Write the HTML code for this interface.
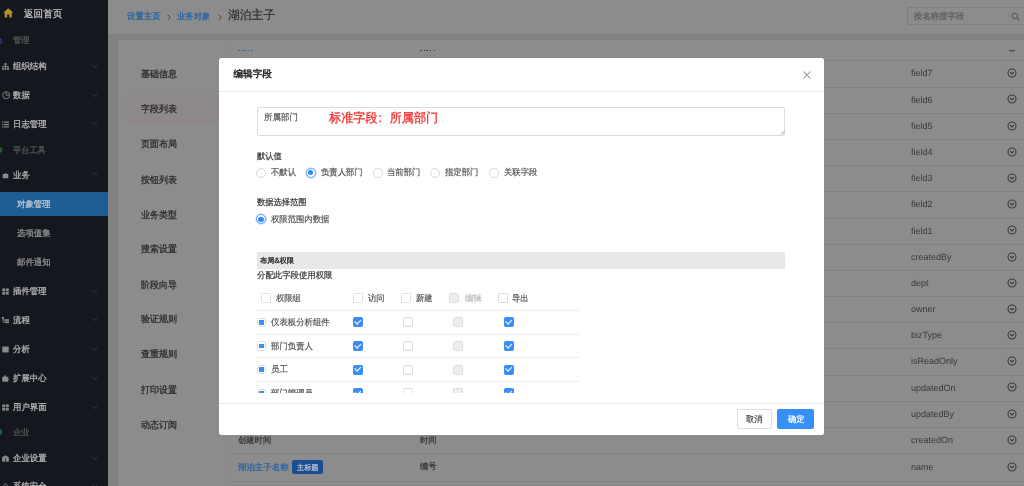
<!DOCTYPE html><html><head><meta charset="utf-8"><style>
*{box-sizing:border-box;margin:0;padding:0}
html,body{width:1024px;height:486px;overflow:hidden;background:#828282;font-family:"Liberation Sans",sans-serif}
html{filter:blur(0.4px)}
.a{position:absolute}
.t{position:absolute;white-space:nowrap;text-rendering:geometricPrecision;transform-origin:0 50%}
.ch{position:absolute;width:3.5px;height:3.5px;border-right:1px solid #303237;border-bottom:1px solid #303237;transform:rotate(45deg)}
.chu{transform:rotate(-135deg)}
.cb{position:absolute;width:10px;height:10px;border:1px solid #dcdcdc;border-radius:1.5px;background:#fff}
.cb.dis{background:#efefef;border-color:#dadada}
.cb.on{background:#3a8ff7;border-color:#3a8ff7}
.cb.on:after{content:"";position:absolute;left:2.7px;top:-0.1px;width:2.5px;height:4.6px;border-right:1.05px solid #fff;border-bottom:1.05px solid #fff;transform:rotate(45deg)}
.cb.ind:after{content:"";position:absolute;left:1.3px;top:1.4px;width:4.4px;height:4.4px;background:#3a8ff7}
.rad{position:absolute;width:9.8px;height:9.8px;border:1px solid #d9d9d9;border-radius:50%;background:#fff}
.rad.on{border-color:#5ea6fc;box-shadow:0 0 0 0.7px rgba(58,143,247,.3)}
.rad.on:after{content:"";position:absolute;left:1.3px;top:1.3px;width:5.2px;height:5.2px;border-radius:50%;background:#2f88fb}
</style></head><body>
<div class="a" style="left:0.00px;top:0.00px;width:108.00px;height:486.00px;background:#15171e;"></div>
<svg class="a" style="left:3px;top:8.4px" width="10.5" height="9.6" viewBox="0 0 11 10"><path d="M5.5 0.2 L0.2 5 L1.8 5 L1.8 9.8 L4.3 9.8 L4.3 6.8 L6.7 6.8 L6.7 9.8 L9.2 9.8 L9.2 5 L10.8 5 Z" fill="#b39030"/></svg>
<div class="t" style="left:24.00px;top:9.31px;font-size:9.984px;line-height:11.981px;color:#c4c4c4;-webkit-text-stroke-width:0.250px;transform:scaleX(0.9615);">返回首页</div>
<div class="a" style="left:-4px;top:37.6px;width:6px;height:6px;border:1px solid #7b2fd0;border-radius:50%"></div>
<div class="t" style="left:13.20px;top:35.48px;font-size:8.528px;line-height:10.234px;color:#545454;-webkit-text-stroke-width:0.300px;transform:scaleX(0.9615);">管理</div>
<div class="t" style="left:13.20px;top:61.26px;font-size:8.736px;line-height:10.483px;color:#b2b2b2;-webkit-text-stroke-width:0.300px;transform:scaleX(0.9615);">组织结构</div>
<svg class="a" style="left:2.3px;top:63.0px" width="7" height="7" viewBox="0 0 8 8" fill="#8a8a8a"><rect x="2.8" y="0" width="2.4" height="2.6"/><rect x="3.5" y="2.4" width="1" height="1.6"/><rect x="0.6" y="3.6" width="6.8" height="1"/><rect x="0.6" y="3.6" width="1" height="2"/><rect x="6.4" y="3.6" width="1" height="2"/><rect x="3.5" y="3.6" width="1" height="2"/><rect x="0" y="5.6" width="2.2" height="2.2"/><rect x="2.9" y="5.6" width="2.2" height="2.2"/><rect x="5.8" y="5.6" width="2.2" height="2.2"/></svg>
<div class="ch" style="left:92.8px;top:62.7px"></div>
<div class="t" style="left:13.20px;top:90.16px;font-size:8.736px;line-height:10.483px;color:#b2b2b2;-webkit-text-stroke-width:0.300px;transform:scaleX(0.9615);">数据</div>
<svg class="a" style="left:1.5px;top:91.2px" width="8.4" height="8.4" viewBox="0 0 8 8" fill="#8a8a8a"><circle cx="4" cy="4" r="3.3" fill="none" stroke="#8a8a8a" stroke-width="0.85"/><path d="M4 1.2 V4 H6.6" fill="none" stroke="#8a8a8a" stroke-width="0.85"/></svg>
<div class="ch" style="left:92.8px;top:91.6px"></div>
<div class="t" style="left:13.20px;top:118.96px;font-size:8.736px;line-height:10.483px;color:#b2b2b2;-webkit-text-stroke-width:0.300px;transform:scaleX(0.9615);">日志管理</div>
<svg class="a" style="left:2.3px;top:120.7px" width="7" height="7" viewBox="0 0 8 8" fill="#8a8a8a"><rect x="0" y="0.6" width="1.4" height="1.4"/><rect x="2.2" y="0.6" width="5.8" height="1.4"/><rect x="0" y="3.3" width="1.4" height="1.4"/><rect x="2.2" y="3.3" width="5.8" height="1.4"/><rect x="0" y="6" width="1.4" height="1.4"/><rect x="2.2" y="6" width="5.8" height="1.4"/></svg>
<div class="ch" style="left:92.8px;top:120.4px"></div>
<div class="a" style="left:-4px;top:146.8px;width:6px;height:6px;border:1px solid #2aa52a;border-radius:50%"></div>
<div class="t" style="left:13.20px;top:144.68px;font-size:8.528px;line-height:10.234px;color:#545454;-webkit-text-stroke-width:0.300px;transform:scaleX(0.9615);">平台工具</div>
<div class="t" style="left:13.20px;top:170.16px;font-size:8.736px;line-height:10.483px;color:#b2b2b2;-webkit-text-stroke-width:0.300px;transform:scaleX(0.9615);">业务</div>
<svg class="a" style="left:2.3px;top:171.9px" width="7" height="7" viewBox="0 0 8 8" fill="#8a8a8a"><path d="M3.2 1.2 H4.8 V2.3 H7.2 V7.2 H0.8 V2.3 H3.2 Z"/></svg>
<div class="ch chu" style="left:92.8px;top:174.4px"></div>
<div class="a" style="left:0.00px;top:192.00px;width:108.00px;height:24.40px;background:#1f5e94;"></div>
<div class="t" style="left:16.50px;top:198.96px;font-size:8.736px;line-height:10.483px;color:#b8c4d1;-webkit-text-stroke-width:0.300px;transform:scaleX(0.9615);">对象管理</div>
<div class="t" style="left:16.50px;top:228.46px;font-size:8.736px;line-height:10.483px;color:#8c8c8c;-webkit-text-stroke-width:0.300px;transform:scaleX(0.9615);">选项值集</div>
<div class="t" style="left:16.50px;top:257.26px;font-size:8.736px;line-height:10.483px;color:#8c8c8c;-webkit-text-stroke-width:0.300px;transform:scaleX(0.9615);">邮件通知</div>
<div class="t" style="left:13.20px;top:286.16px;font-size:8.736px;line-height:10.483px;color:#b2b2b2;-webkit-text-stroke-width:0.300px;transform:scaleX(0.9615);">插件管理</div>
<svg class="a" style="left:2.3px;top:287.9px" width="7" height="7" viewBox="0 0 8 8" fill="#8a8a8a"><rect x="0.3" y="0.5" width="3.3" height="3.2"/><rect x="4.4" y="0.5" width="3.3" height="3.2"/><rect x="0.3" y="4.4" width="3.3" height="3.2"/><rect x="4.4" y="4.4" width="3.3" height="3.2"/></svg>
<div class="ch" style="left:92.8px;top:287.6px"></div>
<div class="t" style="left:13.20px;top:314.96px;font-size:8.736px;line-height:10.483px;color:#b2b2b2;-webkit-text-stroke-width:0.300px;transform:scaleX(0.9615);">流程</div>
<svg class="a" style="left:2.3px;top:316.7px" width="7" height="7" viewBox="0 0 8 8" fill="#8a8a8a"><rect x="0" y="0" width="2.2" height="2.2"/><rect x="0.7" y="2" width="0.9" height="4"/><rect x="1.4" y="3" width="2" height="0.9"/><rect x="1.4" y="5.4" width="2" height="0.9"/><rect x="3.4" y="2.5" width="4.6" height="2"/><rect x="3.4" y="5" width="4.6" height="2"/></svg>
<div class="ch" style="left:92.8px;top:316.4px"></div>
<div class="t" style="left:13.20px;top:344.16px;font-size:8.736px;line-height:10.483px;color:#b2b2b2;-webkit-text-stroke-width:0.300px;transform:scaleX(0.9615);">分析</div>
<svg class="a" style="left:2.3px;top:345.9px" width="7" height="7" viewBox="0 0 8 8" fill="#8a8a8a"><rect x="0.3" y="0.6" width="7.4" height="6.8"/></svg>
<div class="ch" style="left:92.8px;top:345.6px"></div>
<div class="t" style="left:13.20px;top:373.46px;font-size:8.736px;line-height:10.483px;color:#b2b2b2;-webkit-text-stroke-width:0.300px;transform:scaleX(0.9615);">扩展中心</div>
<svg class="a" style="left:2.3px;top:375.2px" width="7" height="7" viewBox="0 0 8 8" fill="#8a8a8a"><path d="M2.5 0.5 Q4 -0.4 4.6 1.2 L4.6 2 H7.2 V4 Q8.6 4.3 7.2 5.5 V7.6 H0.4 V5.2 Q-0.7 4.2 0.4 3.3 V2 H2.4 Z"/></svg>
<div class="ch" style="left:92.8px;top:374.9px"></div>
<div class="t" style="left:13.20px;top:402.26px;font-size:8.736px;line-height:10.483px;color:#b2b2b2;-webkit-text-stroke-width:0.300px;transform:scaleX(0.9615);">用户界面</div>
<svg class="a" style="left:2.3px;top:404.0px" width="7" height="7" viewBox="0 0 8 8" fill="#8a8a8a"><rect x="0.3" y="0.5" width="3.3" height="3.2"/><rect x="4.4" y="0.5" width="3.3" height="3.2"/><rect x="0.3" y="4.4" width="3.3" height="3.2"/><rect x="4.4" y="4.4" width="3.3" height="3.2"/></svg>
<div class="ch" style="left:92.8px;top:403.7px"></div>
<div class="a" style="left:-4px;top:429.4px;width:6px;height:6px;border:1px solid #1aa5b8;border-radius:50%"></div>
<div class="t" style="left:13.20px;top:427.28px;font-size:8.528px;line-height:10.234px;color:#545454;-webkit-text-stroke-width:0.300px;transform:scaleX(0.9615);">企业</div>
<div class="t" style="left:13.20px;top:453.16px;font-size:8.736px;line-height:10.483px;color:#b2b2b2;-webkit-text-stroke-width:0.300px;transform:scaleX(0.9615);">企业设置</div>
<svg class="a" style="left:2.3px;top:454.9px" width="7" height="7" viewBox="0 0 8 8" fill="#8a8a8a"><path d="M4 0.2 L7.8 2.6 V7.8 H4.4 V3 H3.6 V7.8 H0.2 V2.6 Z"/></svg>
<div class="ch" style="left:92.8px;top:454.6px"></div>
<div class="t" style="left:13.20px;top:481.26px;font-size:8.736px;line-height:10.483px;color:#b2b2b2;-webkit-text-stroke-width:0.300px;transform:scaleX(0.9615);">系统安全</div>
<svg class="a" style="left:2.3px;top:483.0px" width="7" height="7" viewBox="0 0 8 8" fill="#8a8a8a"><path d="M2 3.5 V2.2 Q4 -0.8 6 2.2 V3.5" fill="none" stroke="#808080" stroke-width="1"/><rect x="0.8" y="3.5" width="6.4" height="4.5"/></svg>
<div class="ch" style="left:92.8px;top:482.7px"></div>
<div class="a" style="left:108.00px;top:0.00px;width:916.00px;height:33.50px;background:#8c8c8c;"></div>
<div class="t" style="left:126.50px;top:10.76px;font-size:8.736px;line-height:10.483px;color:#2762a3;-webkit-text-stroke-width:0.250px;transform:scaleX(0.9615);">设置主页</div>
<svg class="a" style="left:167px;top:13.5px" width="4" height="6.5" viewBox="0 0 4 6.5"><path d="M0.5 0.5 L3.3 3.25 L0.5 6" fill="none" stroke="#3c3c3c" stroke-width="0.9"/></svg>
<div class="t" style="left:177.40px;top:10.79px;font-size:8.684px;line-height:10.421px;color:#2762a3;-webkit-text-stroke-width:0.250px;transform:scaleX(0.9615);">业务对象</div>
<svg class="a" style="left:218px;top:13.5px" width="4" height="6.5" viewBox="0 0 4 6.5"><path d="M0.5 0.5 L3.3 3.25 L0.5 6" fill="none" stroke="#3c3c3c" stroke-width="0.9"/></svg>
<div class="t" style="left:228.00px;top:8.04px;font-size:12.272px;line-height:14.726px;color:#2c2c2c;-webkit-text-stroke-width:0.200px;transform:scaleX(0.9615);">湖泊主子</div>
<div class="a" style="left:906.5px;top:7px;width:130px;height:18.2px;border:1px solid #7f7f7f;border-radius:2px"></div>
<div class="t" style="left:913.90px;top:11.16px;font-size:8.736px;line-height:10.483px;color:#5c5c5c;-webkit-text-stroke-width:0.200px;transform:scaleX(0.9615);">按名称搜字段</div>
<svg class="a" style="left:1011px;top:12px" width="9" height="9" viewBox="0 0 9 9"><circle cx="3.8" cy="3.8" r="2.8" fill="none" stroke="#505050" stroke-width="1"/><path d="M5.9 5.9 L8.2 8.2" stroke="#505050" stroke-width="1.1"/></svg>
<div class="a" style="left:117.50px;top:40.20px;width:906.50px;height:446.00px;background:#8c8c8c;"></div>
<div class="a" style="left:126.20px;top:93.80px;width:100.00px;height:28.80px;background:#8e8888;"></div>
<div class="t" style="left:141.00px;top:69.08px;font-size:9.360px;line-height:11.232px;color:#2a2a2a;-webkit-text-stroke-width:0.280px;transform:scaleX(0.9615);">基础信息</div>
<div class="t" style="left:141.00px;top:104.08px;font-size:9.360px;line-height:11.232px;color:#2a2a2a;-webkit-text-stroke-width:0.280px;transform:scaleX(0.9615);">字段列表</div>
<div class="t" style="left:141.00px;top:139.38px;font-size:9.360px;line-height:11.232px;color:#2a2a2a;-webkit-text-stroke-width:0.280px;transform:scaleX(0.9615);">页面布局</div>
<div class="t" style="left:141.00px;top:174.88px;font-size:9.360px;line-height:11.232px;color:#2a2a2a;-webkit-text-stroke-width:0.280px;transform:scaleX(0.9615);">按钮列表</div>
<div class="t" style="left:141.00px;top:209.68px;font-size:9.360px;line-height:11.232px;color:#2a2a2a;-webkit-text-stroke-width:0.280px;transform:scaleX(0.9615);">业务类型</div>
<div class="t" style="left:141.00px;top:244.38px;font-size:9.360px;line-height:11.232px;color:#2a2a2a;-webkit-text-stroke-width:0.280px;transform:scaleX(0.9615);">搜索设置</div>
<div class="t" style="left:141.00px;top:279.68px;font-size:9.360px;line-height:11.232px;color:#2a2a2a;-webkit-text-stroke-width:0.280px;transform:scaleX(0.9615);">阶段向导</div>
<div class="t" style="left:141.00px;top:314.28px;font-size:9.360px;line-height:11.232px;color:#2a2a2a;-webkit-text-stroke-width:0.280px;transform:scaleX(0.9615);">验证规则</div>
<div class="t" style="left:141.00px;top:349.38px;font-size:9.360px;line-height:11.232px;color:#2a2a2a;-webkit-text-stroke-width:0.280px;transform:scaleX(0.9615);">查重规则</div>
<div class="t" style="left:141.00px;top:385.48px;font-size:9.360px;line-height:11.232px;color:#2a2a2a;-webkit-text-stroke-width:0.280px;transform:scaleX(0.9615);">打印设置</div>
<div class="t" style="left:141.00px;top:420.08px;font-size:9.360px;line-height:11.232px;color:#2a2a2a;-webkit-text-stroke-width:0.280px;transform:scaleX(0.9615);">动态订阅</div>
<div class="a" style="left:226.30px;top:40.00px;width:1.00px;height:446.00px;background:#868686;"></div>
<div class="a" style="left:118px;top:49.6px;width:906px;height:437px;overflow:hidden">
<div class="a" style="left:115.00px;top:10.80px;width:791.00px;height:1.00px;background:#818181;"></div>
<svg class="a" style="left:889.30px;top:-7.60px" width="10" height="10" viewBox="0 0 10 10"><circle cx="5" cy="5" r="4" fill="none" stroke="#3a3a3a" stroke-width="1.1"/><path d="M3.2 4.2 L5 6 L6.8 4.2" fill="none" stroke="#3a3a3a" stroke-width="1.2"/></svg>
<div class="a" style="left:115.00px;top:36.99px;width:791.00px;height:1.00px;background:#818181;"></div>
<svg class="a" style="left:889.30px;top:18.60px" width="10" height="10" viewBox="0 0 10 10"><circle cx="5" cy="5" r="4" fill="none" stroke="#3a3a3a" stroke-width="1.1"/><path d="M3.2 4.2 L5 6 L6.8 4.2" fill="none" stroke="#3a3a3a" stroke-width="1.2"/></svg>
<div class="t" style="left:792.90px;top:18.78px;font-size:9.000px;line-height:10.800px;color:#383838;-webkit-text-stroke-width:0.000px;">field7</div>
<div class="a" style="left:115.00px;top:63.18px;width:791.00px;height:1.00px;background:#818181;"></div>
<svg class="a" style="left:889.30px;top:44.79px" width="10" height="10" viewBox="0 0 10 10"><circle cx="5" cy="5" r="4" fill="none" stroke="#3a3a3a" stroke-width="1.1"/><path d="M3.2 4.2 L5 6 L6.8 4.2" fill="none" stroke="#3a3a3a" stroke-width="1.2"/></svg>
<div class="t" style="left:792.90px;top:44.97px;font-size:9.000px;line-height:10.800px;color:#383838;-webkit-text-stroke-width:0.000px;">field6</div>
<div class="a" style="left:115.00px;top:89.37px;width:791.00px;height:1.00px;background:#818181;"></div>
<svg class="a" style="left:889.30px;top:70.97px" width="10" height="10" viewBox="0 0 10 10"><circle cx="5" cy="5" r="4" fill="none" stroke="#3a3a3a" stroke-width="1.1"/><path d="M3.2 4.2 L5 6 L6.8 4.2" fill="none" stroke="#3a3a3a" stroke-width="1.2"/></svg>
<div class="t" style="left:792.90px;top:71.16px;font-size:9.000px;line-height:10.800px;color:#383838;-webkit-text-stroke-width:0.000px;">field5</div>
<div class="a" style="left:115.00px;top:115.56px;width:791.00px;height:1.00px;background:#818181;"></div>
<svg class="a" style="left:889.30px;top:97.16px" width="10" height="10" viewBox="0 0 10 10"><circle cx="5" cy="5" r="4" fill="none" stroke="#3a3a3a" stroke-width="1.1"/><path d="M3.2 4.2 L5 6 L6.8 4.2" fill="none" stroke="#3a3a3a" stroke-width="1.2"/></svg>
<div class="t" style="left:792.90px;top:97.35px;font-size:9.000px;line-height:10.800px;color:#383838;-webkit-text-stroke-width:0.000px;">field4</div>
<div class="a" style="left:115.00px;top:141.75px;width:791.00px;height:1.00px;background:#818181;"></div>
<svg class="a" style="left:889.30px;top:123.35px" width="10" height="10" viewBox="0 0 10 10"><circle cx="5" cy="5" r="4" fill="none" stroke="#3a3a3a" stroke-width="1.1"/><path d="M3.2 4.2 L5 6 L6.8 4.2" fill="none" stroke="#3a3a3a" stroke-width="1.2"/></svg>
<div class="t" style="left:792.90px;top:123.54px;font-size:9.000px;line-height:10.800px;color:#383838;-webkit-text-stroke-width:0.000px;">field3</div>
<div class="a" style="left:115.00px;top:167.94px;width:791.00px;height:1.00px;background:#818181;"></div>
<svg class="a" style="left:889.30px;top:149.55px" width="10" height="10" viewBox="0 0 10 10"><circle cx="5" cy="5" r="4" fill="none" stroke="#3a3a3a" stroke-width="1.1"/><path d="M3.2 4.2 L5 6 L6.8 4.2" fill="none" stroke="#3a3a3a" stroke-width="1.2"/></svg>
<div class="t" style="left:792.90px;top:149.73px;font-size:9.000px;line-height:10.800px;color:#383838;-webkit-text-stroke-width:0.000px;">field2</div>
<div class="a" style="left:115.00px;top:194.13px;width:791.00px;height:1.00px;background:#818181;"></div>
<svg class="a" style="left:889.30px;top:175.74px" width="10" height="10" viewBox="0 0 10 10"><circle cx="5" cy="5" r="4" fill="none" stroke="#3a3a3a" stroke-width="1.1"/><path d="M3.2 4.2 L5 6 L6.8 4.2" fill="none" stroke="#3a3a3a" stroke-width="1.2"/></svg>
<div class="t" style="left:792.90px;top:175.92px;font-size:9.000px;line-height:10.800px;color:#383838;-webkit-text-stroke-width:0.000px;">field1</div>
<div class="a" style="left:115.00px;top:220.32px;width:791.00px;height:1.00px;background:#818181;"></div>
<svg class="a" style="left:889.30px;top:201.93px" width="10" height="10" viewBox="0 0 10 10"><circle cx="5" cy="5" r="4" fill="none" stroke="#3a3a3a" stroke-width="1.1"/><path d="M3.2 4.2 L5 6 L6.8 4.2" fill="none" stroke="#3a3a3a" stroke-width="1.2"/></svg>
<div class="t" style="left:792.90px;top:202.11px;font-size:9.000px;line-height:10.800px;color:#383838;-webkit-text-stroke-width:0.000px;">createdBy</div>
<div class="a" style="left:115.00px;top:246.51px;width:791.00px;height:1.00px;background:#818181;"></div>
<svg class="a" style="left:889.30px;top:228.12px" width="10" height="10" viewBox="0 0 10 10"><circle cx="5" cy="5" r="4" fill="none" stroke="#3a3a3a" stroke-width="1.1"/><path d="M3.2 4.2 L5 6 L6.8 4.2" fill="none" stroke="#3a3a3a" stroke-width="1.2"/></svg>
<div class="t" style="left:792.90px;top:228.30px;font-size:9.000px;line-height:10.800px;color:#383838;-webkit-text-stroke-width:0.000px;">dept</div>
<div class="a" style="left:115.00px;top:272.70px;width:791.00px;height:1.00px;background:#818181;"></div>
<svg class="a" style="left:889.30px;top:254.31px" width="10" height="10" viewBox="0 0 10 10"><circle cx="5" cy="5" r="4" fill="none" stroke="#3a3a3a" stroke-width="1.1"/><path d="M3.2 4.2 L5 6 L6.8 4.2" fill="none" stroke="#3a3a3a" stroke-width="1.2"/></svg>
<div class="t" style="left:792.90px;top:254.49px;font-size:9.000px;line-height:10.800px;color:#383838;-webkit-text-stroke-width:0.000px;">owner</div>
<div class="a" style="left:115.00px;top:298.89px;width:791.00px;height:1.00px;background:#818181;"></div>
<svg class="a" style="left:889.30px;top:280.50px" width="10" height="10" viewBox="0 0 10 10"><circle cx="5" cy="5" r="4" fill="none" stroke="#3a3a3a" stroke-width="1.1"/><path d="M3.2 4.2 L5 6 L6.8 4.2" fill="none" stroke="#3a3a3a" stroke-width="1.2"/></svg>
<div class="t" style="left:792.90px;top:280.68px;font-size:9.000px;line-height:10.800px;color:#383838;-webkit-text-stroke-width:0.000px;">bizType</div>
<div class="a" style="left:115.00px;top:325.08px;width:791.00px;height:1.00px;background:#818181;"></div>
<svg class="a" style="left:889.30px;top:306.69px" width="10" height="10" viewBox="0 0 10 10"><circle cx="5" cy="5" r="4" fill="none" stroke="#3a3a3a" stroke-width="1.1"/><path d="M3.2 4.2 L5 6 L6.8 4.2" fill="none" stroke="#3a3a3a" stroke-width="1.2"/></svg>
<div class="t" style="left:792.90px;top:306.87px;font-size:9.000px;line-height:10.800px;color:#383838;-webkit-text-stroke-width:0.000px;">isReadOnly</div>
<div class="a" style="left:115.00px;top:351.27px;width:791.00px;height:1.00px;background:#818181;"></div>
<svg class="a" style="left:889.30px;top:332.88px" width="10" height="10" viewBox="0 0 10 10"><circle cx="5" cy="5" r="4" fill="none" stroke="#3a3a3a" stroke-width="1.1"/><path d="M3.2 4.2 L5 6 L6.8 4.2" fill="none" stroke="#3a3a3a" stroke-width="1.2"/></svg>
<div class="t" style="left:792.90px;top:333.06px;font-size:9.000px;line-height:10.800px;color:#383838;-webkit-text-stroke-width:0.000px;">updatedOn</div>
<div class="a" style="left:115.00px;top:377.46px;width:791.00px;height:1.00px;background:#818181;"></div>
<svg class="a" style="left:889.30px;top:359.06px" width="10" height="10" viewBox="0 0 10 10"><circle cx="5" cy="5" r="4" fill="none" stroke="#3a3a3a" stroke-width="1.1"/><path d="M3.2 4.2 L5 6 L6.8 4.2" fill="none" stroke="#3a3a3a" stroke-width="1.2"/></svg>
<div class="t" style="left:792.90px;top:359.25px;font-size:9.000px;line-height:10.800px;color:#383838;-webkit-text-stroke-width:0.000px;">updatedBy</div>
<div class="a" style="left:115.00px;top:403.65px;width:791.00px;height:1.00px;background:#818181;"></div>
<svg class="a" style="left:889.30px;top:385.25px" width="10" height="10" viewBox="0 0 10 10"><circle cx="5" cy="5" r="4" fill="none" stroke="#3a3a3a" stroke-width="1.1"/><path d="M3.2 4.2 L5 6 L6.8 4.2" fill="none" stroke="#3a3a3a" stroke-width="1.2"/></svg>
<div class="t" style="left:792.90px;top:385.44px;font-size:9.000px;line-height:10.800px;color:#383838;-webkit-text-stroke-width:0.000px;">createdOn</div>
<div class="a" style="left:115.00px;top:431.05px;width:791.00px;height:1.00px;background:#818181;"></div>
<svg class="a" style="left:889.30px;top:412.05px" width="10" height="10" viewBox="0 0 10 10"><circle cx="5" cy="5" r="4" fill="none" stroke="#3a3a3a" stroke-width="1.1"/><path d="M3.2 4.2 L5 6 L6.8 4.2" fill="none" stroke="#3a3a3a" stroke-width="1.2"/></svg>
<div class="t" style="left:792.90px;top:412.23px;font-size:9.000px;line-height:10.800px;color:#383838;-webkit-text-stroke-width:0.000px;">name</div>
<div class="a" style="left:120.30px;top:0.00px;width:1.50px;height:1.10px;background:#3566a0;"></div>
<div class="a" style="left:123.40px;top:0.00px;width:1.50px;height:1.10px;background:#3566a0;"></div>
<div class="a" style="left:126.10px;top:0.00px;width:1.50px;height:1.10px;background:#3566a0;"></div>
<div class="a" style="left:129.60px;top:0.00px;width:1.50px;height:1.10px;background:#3566a0;"></div>
<div class="a" style="left:133.30px;top:0.00px;width:1.50px;height:1.10px;background:#3566a0;"></div>
<div class="a" style="left:302.40px;top:0.00px;width:1.50px;height:1.10px;background:#404040;"></div>
<div class="a" style="left:305.50px;top:0.00px;width:1.50px;height:1.10px;background:#404040;"></div>
<div class="a" style="left:308.00px;top:0.00px;width:1.50px;height:1.10px;background:#404040;"></div>
<div class="a" style="left:311.50px;top:0.00px;width:1.50px;height:1.10px;background:#404040;"></div>
<div class="a" style="left:315.60px;top:0.00px;width:1.50px;height:1.10px;background:#404040;"></div>
<div class="t" style="left:120.30px;top:385.72px;font-size:8.632px;line-height:10.358px;color:#303030;-webkit-text-stroke-width:0.200px;transform:scaleX(0.9615);">创建时间</div>
<div class="t" style="left:302.30px;top:385.58px;font-size:8.528px;line-height:10.234px;color:#303030;-webkit-text-stroke-width:0.200px;transform:scaleX(0.9615);">时间</div>
<div class="t" style="left:120.30px;top:412.13px;font-size:8.788px;line-height:10.546px;color:#2762a3;-webkit-text-stroke-width:0.250px;transform:scaleX(0.9615);">湖泊主子名称</div>
<div class="a" style="left:173.70px;top:410.50px;width:31.30px;height:13.70px;background:#1a4d91;border-radius:2px"></div>
<div class="t" style="left:178.80px;top:413.21px;font-size:7.488px;line-height:8.986px;color:#b8c4d3;-webkit-text-stroke-width:0.200px;transform:scaleX(0.9615);">主标题</div>
<div class="t" style="left:302.30px;top:411.28px;font-size:8.528px;line-height:10.234px;color:#303030;-webkit-text-stroke-width:0.200px;transform:scaleX(0.9615);">编号</div>
</div>
<div class="a" style="left:219px;top:58.4px;width:605px;height:376.4px;background:#fff;border-radius:2.5px;overflow:hidden">
<div class="t" style="left:14.50px;top:11.04px;font-size:9.600px;line-height:11.520px;color:#2b2b2b;-webkit-text-stroke-width:0.450px;">编辑字段</div>
<svg class="a" style="left:583.90px;top:12.90px" width="8" height="8" viewBox="0 0 8 8"><path d="M0.5 0.5 L7.5 7.5 M7.5 0.5 L0.5 7.5" stroke="#8a8a8a" stroke-width="1.05"/></svg>
<div class="a" style="left:0.00px;top:32.40px;width:605.00px;height:1.00px;background:#ebebeb;"></div>
<div class="a" style="left:37.90px;top:49.00px;width:528.5px;height:28.8px;border:1px solid #dcdcdc;border-radius:2px"></div>
<svg class="a" style="left:561.00px;top:71.60px" width="5" height="5" viewBox="0 0 5 5"><path d="M4.5 0.6 L0.6 4.5 M4.5 2.6 L2.6 4.5" stroke="#9a9a9a" stroke-width="0.7"/></svg>
<div class="t" style="left:44.70px;top:54.00px;font-size:8.840px;line-height:10.608px;color:#555555;-webkit-text-stroke-width:0.200px;transform:scaleX(0.9615);">所属部门</div>
<div class="t" style="left:110.10px;top:52.32px;font-size:12.636px;line-height:15.163px;color:#f2302d;-webkit-text-stroke-width:0.300px;transform:scaleX(0.9615);">标准字段<span style="display:inline-block;width:1em;padding-left:1px">:</span>所属部门</div>
<div class="t" style="left:38.00px;top:92.12px;font-size:8.632px;line-height:10.358px;color:#333333;-webkit-text-stroke-width:0.200px;transform:scaleX(0.9615);">默认值</div>
<div class="rad" style="left:37.20px;top:109.60px"></div>
<div class="t" style="left:52.30px;top:109.09px;font-size:8.684px;line-height:10.421px;color:#555555;-webkit-text-stroke-width:0.200px;transform:scaleX(0.9615);">不默认</div>
<div class="rad on" style="left:86.80px;top:109.60px"></div>
<div class="t" style="left:102.30px;top:109.09px;font-size:8.684px;line-height:10.421px;color:#555555;-webkit-text-stroke-width:0.200px;transform:scaleX(0.9615);">负责人部门</div>
<div class="rad" style="left:153.80px;top:109.60px"></div>
<div class="t" style="left:168.30px;top:109.09px;font-size:8.684px;line-height:10.421px;color:#555555;-webkit-text-stroke-width:0.200px;transform:scaleX(0.9615);">当前部门</div>
<div class="rad" style="left:211.30px;top:109.60px"></div>
<div class="t" style="left:226.00px;top:109.09px;font-size:8.684px;line-height:10.421px;color:#555555;-webkit-text-stroke-width:0.200px;transform:scaleX(0.9615);">指定部门</div>
<div class="rad" style="left:269.90px;top:109.60px"></div>
<div class="t" style="left:284.60px;top:109.09px;font-size:8.684px;line-height:10.421px;color:#555555;-webkit-text-stroke-width:0.200px;transform:scaleX(0.9615);">关联字段</div>
<div class="t" style="left:38.00px;top:138.95px;font-size:8.580px;line-height:10.296px;color:#333333;-webkit-text-stroke-width:0.200px;transform:scaleX(0.9615);">数据选择范围</div>
<div class="rad on" style="left:37.20px;top:156.00px"></div>
<div class="t" style="left:52.30px;top:155.69px;font-size:8.684px;line-height:10.421px;color:#555555;-webkit-text-stroke-width:0.200px;transform:scaleX(0.9615);">权限范围内数据</div>
<div class="a" style="left:37.60px;top:193.60px;width:528.50px;height:17.00px;background:#e8e8e8;"></div>
<div class="t" style="left:40.50px;top:197.34px;font-size:7.592px;line-height:9.110px;color:#2a2a2a;-webkit-text-stroke-width:0.300px;transform:scaleX(0.9615);">布局&amp;权限</div>
<div class="t" style="left:38.00px;top:211.96px;font-size:8.736px;line-height:10.483px;color:#333333;-webkit-text-stroke-width:0.200px;transform:scaleX(0.9615);">分配此字段使用权限</div>
<div class="cb " style="left:42.40px;top:234.20px"></div>
<div class="t" style="left:57.40px;top:234.62px;font-size:8.632px;line-height:10.358px;color:#555555;-webkit-text-stroke-width:0.200px;transform:scaleX(0.9615);">权限组</div>
<div class="cb " style="left:133.70px;top:234.20px"></div>
<div class="t" style="left:149.00px;top:234.62px;font-size:8.632px;line-height:10.358px;color:#555555;-webkit-text-stroke-width:0.200px;transform:scaleX(0.9615);">访问</div>
<div class="cb " style="left:182.00px;top:234.20px"></div>
<div class="t" style="left:196.70px;top:234.62px;font-size:8.632px;line-height:10.358px;color:#555555;-webkit-text-stroke-width:0.200px;transform:scaleX(0.9615);">新建</div>
<div class="cb dis" style="left:230.10px;top:234.20px"></div>
<div class="t" style="left:245.50px;top:234.62px;font-size:8.632px;line-height:10.358px;color:#bdbdbd;-webkit-text-stroke-width:0.200px;transform:scaleX(0.9615);">编辑</div>
<div class="cb " style="left:279.00px;top:234.20px"></div>
<div class="t" style="left:293.00px;top:234.62px;font-size:8.632px;line-height:10.358px;color:#555555;-webkit-text-stroke-width:0.200px;transform:scaleX(0.9615);">导出</div>
<div class="a" style="left:37.90px;top:251.60px;width:330px;height:83.30px;overflow:hidden">
<div class="a" style="left:0.00px;top:0.30px;width:321.90px;height:1.00px;background:#ececec;"></div>
<div class="cb ind" style="left:0;top:7.90px;width:9px;height:9.2px"></div>
<div class="t" style="left:14.40px;top:7.26px;font-size:8.736px;line-height:10.483px;color:#555555;-webkit-text-stroke-width:0.200px;transform:scaleX(0.9615);">仪表板分析组件</div>
<div class="cb on" style="left:95.80px;top:7.50px"></div>
<div class="cb " style="left:146.10px;top:7.50px"></div>
<div class="cb dis" style="left:196.60px;top:7.50px"></div>
<div class="cb on" style="left:246.70px;top:7.50px"></div>
<div class="a" style="left:0.00px;top:23.85px;width:321.90px;height:1.00px;background:#ececec;"></div>
<div class="cb ind" style="left:0;top:31.45px;width:9px;height:9.2px"></div>
<div class="t" style="left:14.40px;top:30.81px;font-size:8.736px;line-height:10.483px;color:#555555;-webkit-text-stroke-width:0.200px;transform:scaleX(0.9615);">部门负责人</div>
<div class="cb on" style="left:95.80px;top:31.05px"></div>
<div class="cb " style="left:146.10px;top:31.05px"></div>
<div class="cb dis" style="left:196.60px;top:31.05px"></div>
<div class="cb on" style="left:246.70px;top:31.05px"></div>
<div class="a" style="left:0.00px;top:47.40px;width:321.90px;height:1.00px;background:#ececec;"></div>
<div class="cb ind" style="left:0;top:55.00px;width:9px;height:9.2px"></div>
<div class="t" style="left:14.40px;top:54.36px;font-size:8.736px;line-height:10.483px;color:#555555;-webkit-text-stroke-width:0.200px;transform:scaleX(0.9615);">员工</div>
<div class="cb on" style="left:95.80px;top:54.60px"></div>
<div class="cb " style="left:146.10px;top:54.60px"></div>
<div class="cb dis" style="left:196.60px;top:54.60px"></div>
<div class="cb on" style="left:246.70px;top:54.60px"></div>
<div class="a" style="left:0.00px;top:70.95px;width:321.90px;height:1.00px;background:#ececec;"></div>
<div class="cb ind" style="left:0;top:78.55px;width:9px;height:9.2px"></div>
<div class="t" style="left:14.40px;top:77.91px;font-size:8.736px;line-height:10.483px;color:#555555;-webkit-text-stroke-width:0.200px;transform:scaleX(0.9615);">部门管理员</div>
<div class="cb on" style="left:95.80px;top:78.15px"></div>
<div class="cb " style="left:146.10px;top:78.15px"></div>
<div class="cb dis" style="left:196.60px;top:78.15px"></div>
<div class="cb on" style="left:246.70px;top:78.15px"></div>
</div>
<div class="a" style="left:0.00px;top:344.50px;width:605.00px;height:1.00px;background:#ebebeb;"></div>
<div class="a" style="left:517.70px;top:350.90px;width:35.6px;height:19.3px;border:1px solid #dcdcdc;border-radius:2px"></div>
<div class="t" style="left:527.30px;top:355.62px;font-size:8.632px;line-height:10.358px;color:#444444;-webkit-text-stroke-width:0.200px;transform:scaleX(0.9615);">取消</div>
<div class="a" style="left:558.20px;top:350.90px;width:36.80px;height:19.30px;background:#3690fa;border-radius:2px"></div>
<div class="t" style="left:568.70px;top:355.62px;font-size:8.632px;line-height:10.358px;color:#ffffff;-webkit-text-stroke-width:0.200px;transform:scaleX(0.9615);">确定</div>
</div>
</body></html>
